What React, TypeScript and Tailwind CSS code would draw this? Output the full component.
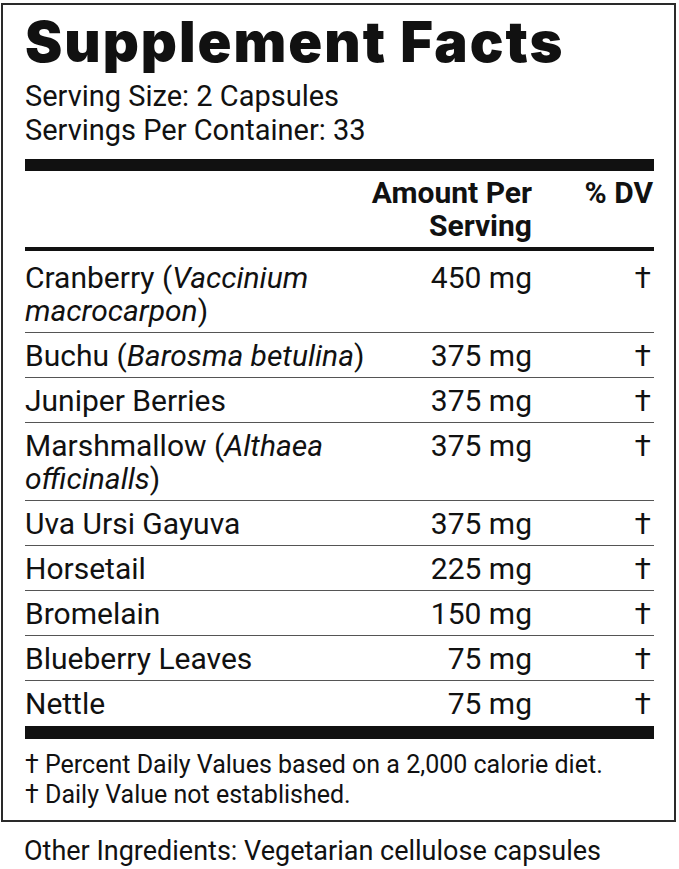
type Row = { name: string; latin?: string; amount: string }

const rows: Row[] = [
  { name: 'Cranberry', latin: 'Vaccinium macrocarpon', amount: '450 mg' },
  { name: 'Buchu', latin: 'Barosma betulina', amount: '375 mg' },
  { name: 'Juniper Berries', amount: '375 mg' },
  { name: 'Marshmallow', latin: 'Althaea officinalls', amount: '375 mg' },
  { name: 'Uva Ursi Gayuva', amount: '375 mg' },
  { name: 'Horsetail', amount: '225 mg' },
  { name: 'Bromelain', amount: '150 mg' },
  { name: 'Blueberry Leaves', amount: '75 mg' },
  { name: 'Nettle', amount: '75 mg' },
]

export default function App() {
  return (
    <div className="w-[679px] h-[869px] overflow-hidden bg-white text-[#111] font-['Roboto','Liberation_Sans',sans-serif]">
      {/* ── Label box ── */}
      <div className="ml-[1px] mt-[3px] w-[675px] border-2 border-[#2a2a2a] pl-[22px] pr-[20px] pt-[9px] pb-[10px]">
        <h1 className="font-['Inter','Liberation_Sans',sans-serif] font-black text-[56px] leading-[56px] tracking-[2px]">
          Supplement Facts
        </h1>
        <div className="mt-[9px] text-[29px] leading-[34px]">
          <p>Serving Size: 2 Capsules</p>
          <p>Servings Per Container: 33</p>
        </div>

        <div className="mt-[12px] h-[12px] bg-[#111]" />

        {/* ── Header ── */}
        <div className="grid grid-cols-[1fr_auto_122px] font-bold text-[30px] leading-[33px] pt-[5px] pb-[5px] border-b-4 border-[#111]">
          <div />
          <div className="text-right whitespace-nowrap">
            Amount Per
            <br />
            Serving
          </div>
          <div className="text-right pr-[1px]">% DV</div>
        </div>

        {/* ── Ingredients ── */}
        <div className="pt-[4px]">
          {rows.map((r, i) => (
            <div
              key={r.name}
              className={`grid grid-cols-[360px_1fr_122px] text-[30px] leading-[33px] py-[5.5px] ${
                i < rows.length - 1 ? 'border-b border-[#555]' : ''
              }`}
            >
              <div>
                {r.name}
                {r.latin && (
                  <>
                    {' '}(<i>{r.latin}</i>)
                  </>
                )}
              </div>
              <div className="text-right">{r.amount}</div>
              <div className="text-right pr-[3px]">†</div>
            </div>
          ))}
        </div>

        <div className="mt-[1px] h-[13px] bg-[#111]" />

        <div className="mt-[11px] text-[25px] leading-[30px]">
          <p>† Percent Daily Values based on a 2,000 calorie diet.</p>
          <p>† Daily Value not established.</p>
        </div>
      </div>

      <p className="mt-[14px] ml-[24px] text-[27px] leading-[31px]">
        Other Ingredients: Vegetarian cellulose capsules
      </p>
    </div>
  )
}
